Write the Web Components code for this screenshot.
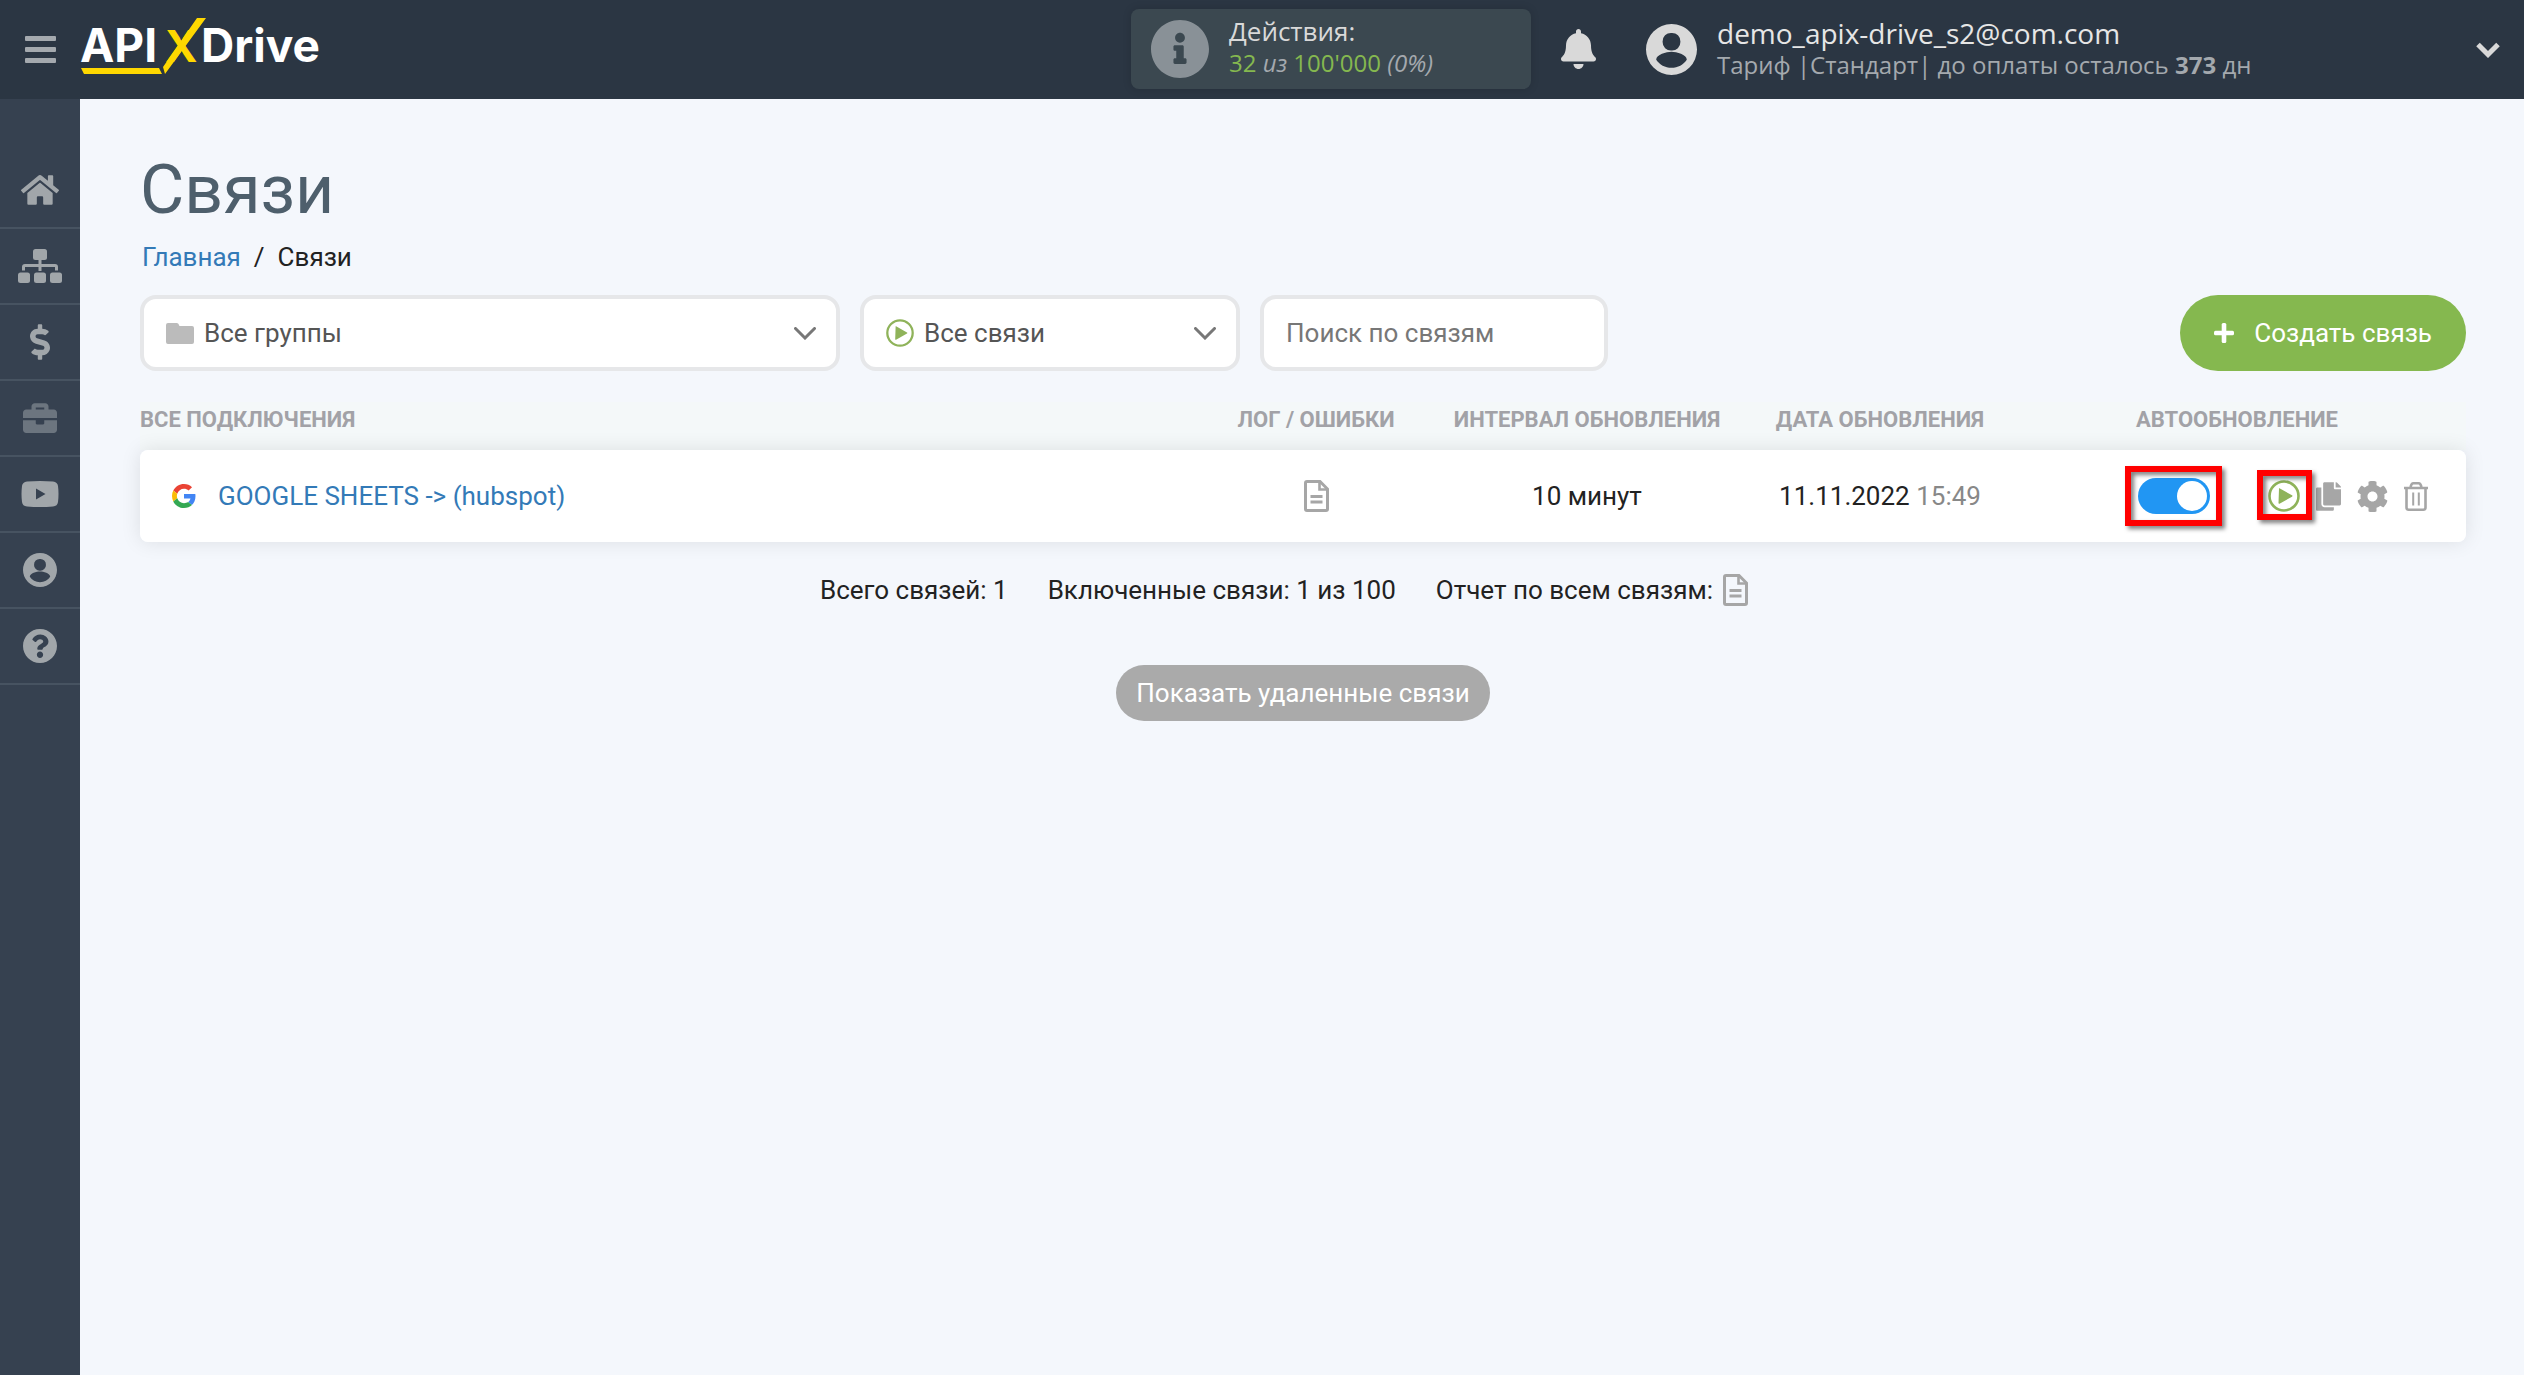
<!DOCTYPE html>
<html lang="ru">
<head>
<meta charset="utf-8">
<title>Связи</title>
<style>
  body { margin: 0; background: #f4f7fc; color: #222; font: 26px/36px Roboto, sans-serif; }
</style>
</head>
<body>
<app-shell>
  <app-header slot="header" email="demo_apix-drive_s2@com.com"></app-header>
  <side-nav slot="nav"></side-nav>
  <page-title heading="Связи"></page-title>
  <tool-bar></tool-bar>
  <connection-table></connection-table>
  <connection-summary></connection-summary>
</app-shell>

<script>
const ICONS = {
  home: ['0 32 576 448', '<path d="M280.37 148.26L96 300.11V464a16 16 0 0 0 16 16l112.06-.29a16 16 0 0 0 15.92-16V368a16 16 0 0 1 16-16h64a16 16 0 0 1 16 16v95.64a16 16 0 0 0 16 16.05L464 480a16 16 0 0 0 16-16V300L295.67 148.26a12.19 12.19 0 0 0-15.3 0zM571.6 251.47L488 182.56V44.05a12 12 0 0 0-12-12h-56a12 12 0 0 0-12 12v72.61L318.47 43a48 48 0 0 0-61 0L4.34 251.47a12 12 0 0 0-1.6 16.9l25.5 31A12 12 0 0 0 45.15 301l235.22-193.74a12.19 12.19 0 0 1 15.3 0L530.9 301a12 12 0 0 0 16.9-1.6l25.5-31a12 12 0 0 0-1.7-16.93z"/>'],
  sitemap: ['0 0 44 34', '<rect x="15" width="14" height="11" rx="2.5"/><rect y="23.500" width="12" height="10.500" rx="2.500"/><rect x="16" y="23.500" width="12" height="10.500" rx="2.500"/><rect x="32" y="23.500" width="12" height="10.500" rx="2.500"/><path d="M5.500 21.500V18a1.500 1.500 0 0 1 1.500-1.500H37a1.500 1.500 0 0 1 1.500 1.500v3.500M22 10v12" fill="none" stroke="currentColor" stroke-width="3"/>'],
  dollar: ['0 0 288 512', '<path d="M209.2 233.4l-108-31.6C88.700 198.200 80 186.500 80 173.500c0-16.300 13.200-29.500 29.500-29.500h66.300c12.200 0 24.200 3.700 34.200 10.500 6.100 4.100 14.300 3.100 19.500-2l34.800-34c7.100-6.900 6.100-18.400-1.800-24.500C238 74.800 207.400 64.100 176 64V16c0-8.800-7.200-16-16-16h-32c-8.800 0-16 7.200-16 16v48h-2.500C45.800 64-5.400 118.700.5 183.600c4.200 46.100 39.400 83.600 83.800 96.600l102.500 30c12.500 3.700 21.200 15.300 21.200 28.300 0 16.300-13.200 29.500-29.500 29.500h-66.300C100 368 88 364.300 78 357.500c-6.100-4.100-14.300-3.100-19.500 2l-34.800 34c-7.100 6.900-6.100 18.400 1.800 24.500 24.500 19.200 55.100 29.900 86.500 30v48c0 8.800 7.200 16 16 16h32c8.800 0 16-7.200 16-16v-48.200c46.600-.9 90.300-28.600 105.700-72.700 21.500-61.600-14.600-124.800-72.500-141.700z"/>'],
  briefcase: ['0 32 512 448', '<path d="M320 336c0 8.840-7.160 16-16 16h-96c-8.840 0-16-7.160-16-16v-48H0v144c0 25.600 22.400 48 48 48h416c25.600 0 48-22.400 48-48V288H320v48zm144-208h-80V80c0-25.600-22.400-48-48-48H176c-25.600 0-48 22.400-48 48v48H48c-25.600 0-48 22.400-48 48v80h512v-80c0-25.600-22.400-48-48-48zm-144 0H192V96h128v32z"/>'],
  video: ['0 0 38 26', '<path fill-rule="evenodd" d="M6 .5Q19-.500 32 .5Q36.500 1 37 5Q38 13 37 21Q36.500 25 32 25.500Q19 26.500 6 25.500Q1.500 25 1 21Q0 13 1 5Q1.500 1 6 .5ZM15 7.500V18.500L24.500 13Z"/>'],
  user: ['2 2 20 20', '<path d="M12,19.200C9.500,19.200 7.290,17.920 6,16C6.030,14 10,12.900 12,12.900C14,12.900 17.970,14 18,16C16.710,17.920 14.500,19.200 12,19.200M12,5.500A3.300,3.300 0 0,1 15.500,9A3.300,3.300 0 0,1 12,12.400A3.300,3.300 0 0,1 8.500,9A3.300,3.300 0 0,1 12,5.500M12,2A10,10 0 0,0 2,12A10,10 0 0,0 12,22A10,10 0 0,0 22,12C22,6.470 17.500,2 12,2Z" fill-rule="evenodd"/>'],
  help: ['8 8 496 496', '<path d="M504 256c0 136.997-111.043 248-248 248S8 392.997 8 256C8 119.083 119.043 8 256 8s248 111.083 248 248zM262.655 90c-54.497 0-89.255 22.957-116.549 63.758-3.536 5.286-2.353 12.415 2.715 16.258l34.699 26.310c5.205 3.947 12.621 3.008 16.665-2.122 17.864-22.658 30.113-35.797 57.303-35.797 20.429 0 45.698 13.148 45.698 32.958 0 14.976-12.363 22.667-32.534 33.976C247.128 238.528 216 254.941 216 296v4c0 6.627 5.373 12 12 12h56c6.627 0 12-5.373 12-12v-1.333c0-28.462 83.186-29.647 83.186-106.667 0-58.002-60.165-102-116.531-102zM256 338c-25.365 0-46 20.635-46 46 0 25.364 20.635 46 46 46s46-20.636 46-46c0-25.365-20.635-46-46-46z"/>'],
  info: ['8 8 496 496', '<path d="M256 8C119.043 8 8 119.083 8 256c0 136.997 111.043 248 248 248s248-111.003 248-248C504 119.083 392.957 8 256 8zm0 110c23.196 0 42 18.804 42 42s-18.804 42-42 42-42-18.804-42-42 18.804-42 42-42zm56 254c0 6.627-5.373 12-12 12h-88c-6.627 0-12-5.373-12-12v-24c0-6.627 5.373-12 12-12h12v-64h-12c-6.627 0-12-5.373-12-12v-24c0-6.627 5.373-12 12-12h64c6.627 0 12 5.373 12 12v100h12c6.627 0 12 5.373 12 12v24z"/>'],
  bell: ['0 0 448 512', '<path d="M224 512c35.320 0 63.970-28.650 63.970-64H160.030c0 35.350 28.650 64 63.970 64zm215.390-149.710c-19.320-20.760-55.470-51.990-55.470-154.290 0-77.700-54.480-139.900-127.940-155.160V32c0-17.670-14.320-32-31.980-32s-31.980 14.330-31.980 32v20.840C118.560 68.100 64.080 130.300 64.080 208c0 102.300-36.150 133.530-55.470 154.290-6 6.450-8.660 14.160-8.610 21.710.11 16.400 12.980 32 32.100 32h383.800c19.120 0 32-15.600 32.100-32 .05-7.550-2.610-15.270-8.610-21.710z"/>'],
  menu: ['0 0 31 27', '<rect width="31" height="5" rx="1"/><rect y="11" width="31" height="5" rx="1"/><rect y="22" width="31" height="5" rx="1"/>'],
  caret: ['0 0 26 17', '<path d="M3 3.500L13 13.500L23 3.500" fill="none" stroke="currentColor" stroke-width="5"/>'],
  chevron: ['0 0 22 13', '<path d="M1.500 1.500L11 11L20.500 1.500" fill="none" stroke="currentColor" stroke-width="3" stroke-linecap="round"/>'],
  folder: ['0 0 28 21', '<path d="M2 0H11Q12.500 0 13.500 3H26Q28 3 28 5V19Q28 21 26 21H2Q0 21 0 19V2Q0 0 2 0Z"/>'],
  play: ['0 0 32 32', '<circle cx="16" cy="16" r="14.500" fill="none" stroke="currentColor" stroke-width="2.600"/><path d="M11 8.500Q10.500 8 11.500 8.300L24 15.300Q25 16 24 16.700L11.500 23.700Q10.500 24 10.500 23Z"/>'],
  plus: ['0 0 20 20', '<rect x="7.700" width="4.600" height="20" rx="1.500"/><rect y="7.700" width="20" height="4.600" rx="1.500"/>'],
  file: ['0 0 25 32', '<path d="M3 1.500H16L23.500 9V29Q23.500 30.500 22 30.500H3Q1.500 30.500 1.500 29V3Q1.500 1.500 3 1.500Z" fill="none" stroke="currentColor" stroke-width="3"/><path d="M15.500 2V9.500H23" fill="none" stroke="currentColor" stroke-width="2.600"/><rect x="6.500" y="15" width="12" height="3"/><rect x="6.500" y="20.500" width="12" height="3"/>'],
  copy: ['0 0 448 512', '<path d="M320 448v40c0 13.255-10.745 24-24 24H24c-13.255 0-24-10.745-24-24V120c0-13.255 10.745-24 24-24h72v296c0 30.879 25.121 56 56 56h168zm0-344V0H152c-13.255 0-24 10.745-24 24v368c0 13.255 10.745 24 24 24h272c13.255 0 24-10.745 24-24V128H344c-13.200 0-24-10.800-24-24zm120.971-31.029L375.029 7.029A24 24 0 0 0 358.059 0H352v96h96v-6.059a24 24 0 0 0-7.029-16.970z"/>'],
  gear: ['8 8 496 496', '<path d="M487.400 315.700l-42.600-24.600c4.300-23.200 4.300-47 0-70.200l42.600-24.600c4.900-2.800 7.100-8.600 5.500-14-11.100-35.600-30-67.800-54.700-94.600-3.800-4.100-10-5.100-14.800-2.300L380.800 110c-17.900-15.400-38.500-27.300-60.800-35.100V25.800c0-5.600-3.900-10.500-9.400-11.700-36.700-8.200-74.300-7.800-109.200 0-5.500 1.200-9.400 6.100-9.400 11.700V75c-22.200 7.900-42.800 19.800-60.800 35.100L88.700 85.500c-4.900-2.800-11-1.900-14.800 2.300-24.700 26.700-43.600 58.900-54.700 94.600-1.700 5.400.6 11.200 5.500 14L67.300 221c-4.300 23.200-4.300 47 0 70.200l-42.600 24.600c-4.900 2.800-7.100 8.600-5.500 14 11.100 35.600 30 67.800 54.700 94.600 3.800 4.100 10 5.100 14.800 2.300l42.600-24.600c17.900 15.400 38.500 27.300 60.800 35.100v49.200c0 5.600 3.900 10.500 9.400 11.700 36.700 8.200 74.300 7.800 109.200 0 5.500-1.200 9.400-6.100 9.400-11.700v-49.200c22.200-7.900 42.800-19.800 60.800-35.100l42.600 24.600c4.900 2.800 11 1.900 14.800-2.300 24.700-26.700 43.600-58.900 54.700-94.600 1.500-5.500-.7-11.300-5.600-14.100zM256 336c-44.100 0-80-35.900-80-80s35.900-80 80-80 80 35.900 80 80-35.900 80-80 80z"/>'],
  trash: ['0 0 24 29', '<path d="M0 6H24M2.500 6V25.500Q2.500 27.700 4.700 27.700H19.300Q21.500 27.700 21.500 25.500V6M6.500 6Q7 1.300 9.500 1.300H14.500Q17 1.300 17.500 6" fill="none" stroke="currentColor" stroke-width="2.600"/><path d="M9.200 10.500V23.500M14.800 10.500V23.500" stroke="currentColor" stroke-width="2"/>'],
  google: ['0 0 48 48', '<path fill="#EA4335" d="M24 9.500c3.540 0 6.710 1.220 9.210 3.600l6.850-6.850C35.900 2.380 30.470 0 24 0 14.620 0 6.510 5.380 2.560 13.220l7.980 6.190C12.430 13.720 17.740 9.500 24 9.500z"/><path fill="#4285F4" d="M46.980 24.550c0-1.570-.15-3.090-.38-4.550H24v9.020h12.940c-.58 2.960-2.260 5.480-4.780 7.180l7.730 6c4.510-4.180 7.090-10.360 7.090-17.650z"/><path fill="#FBBC05" d="M10.530 28.590c-.48-1.450-.76-2.990-.76-4.590s.27-3.140.76-4.590l-7.980-6.190C.92 16.460 0 20.120 0 24c0 3.880.92 7.540 2.560 10.780l7.970-6.190z"/><path fill="#34A853" d="M24 48c6.480 0 11.930-2.130 15.890-5.810l-7.730-6c-2.150 1.450-4.920 2.300-8.160 2.300-6.260 0-11.570-4.220-13.470-9.910l-7.980 6.190C6.510 42.620 14.620 48 24 48z"/>']
};

const BASE = `*,*::before,*::after{box-sizing:border-box}
  button{border:0;background:none;padding:0;color:inherit;font:inherit;cursor:pointer}
  a{color:#337ab7;text-decoration:none}`;

class BaseElement extends HTMLElement {
  connectedCallback() {
    if (this.shadowRoot) return;
    this.attachShadow({ mode: 'open' }).innerHTML = `<style>${BASE}${this.styles()}</style>${this.view()}`;
  }
}
const define = (name, styles, view) => customElements.define(name, class extends BaseElement {
  styles() { return styles; }
  view() { return view(this); }
});

customElements.define('ui-icon', class extends HTMLElement {
  connectedCallback() {
    if (this.shadowRoot) return;
    const [box, body] = ICONS[this.getAttribute('name')];
    const [, , w, h] = box.split(' ').map(Number);
    const width = Number(this.getAttribute('width'));
    this.attachShadow({ mode: 'open' }).innerHTML =
      `<style>:host{display:inline-flex;flex:none}svg{display:block;fill:currentColor}</style>
       <svg viewBox="${box}" width="${width}" height="${Math.round(width * h / w)}" aria-hidden="true">${body}</svg>`;
  }
});

define('app-shell', `
  :host{display:flex;flex-direction:column;min-height:100vh}
  .body{display:flex;flex:1}
  main{flex:1;min-width:0;padding:51px 58px 40px 60px}`,
  () => `<slot name="header"></slot><div class="body"><slot name="nav"></slot><main><slot></slot></main></div>`);

define('brand-logo', `
  :host{display:block}
  a,svg{display:block}
  text{font:700 46px Inter,sans-serif;fill:#fff}
  .accent{fill:#ffd800}
  text.accent{font-size:44px}`,
  () => `<a href="#" aria-label="APIXDrive"><svg width="246" height="66" viewBox="0 0 246 66">
    <text x="0" y="46">API</text><text class="accent" x="85" y="46">X</text><text x="121" y="46">Drive</text>
    <path class="accent" d="M1 52H79L82 58H4ZM83 51L117 2H126L85 58Z"/>
  </svg></a>`);

define('app-header', `
  :host{display:grid;grid-template-columns:1131fr 400px 115px 878fr;align-items:center;height:98px;background:#2b3643;font-family:"Open Sans","Noto Sans",sans-serif;line-height:32px;color:#d9d9d9;border-bottom:1px solid #2b3643}
  .left{display:flex;align-items:center;gap:24px;padding-left:25px}
  .left button{color:#a4a9ae;display:flex}
  .usage{display:flex;align-items:center;gap:20px;height:80px;padding:0 20px;border-radius:8px;background:#3b4850;box-shadow:0 0 8px rgba(0,0,0,.15)}
  .usage ui-icon{color:#899197}
  .usage > div{padding-bottom:4px}
  .small{font-size:24px;color:#a4a9ae}
  .green{color:#85b84f}
  .bell{justify-self:center;display:flex;margin-right:20px}
  .user{display:flex;align-items:center;gap:20px;padding-right:23px}
  .who{flex:1}
  .who .name{font-size:28px;color:#e6e6e6}
  .user button{display:flex}`,
  el => `<div class="left"><button aria-label="Меню"><ui-icon name="menu" width="31"></ui-icon></button><brand-logo></brand-logo></div>
  <div class="usage"><ui-icon name="info" width="58"></ui-icon>
    <div><div>Действия:</div><div class="small"><span class="green">32</span> <i>из</i> <span class="green">100'000</span> <i>(0%)</i></div></div></div>
  <button class="bell" aria-label="Уведомления"><ui-icon name="bell" width="35"></ui-icon></button>
  <div class="user"><ui-icon name="user" width="51"></ui-icon>
    <div class="who"><div class="name">${el.getAttribute('email')}</div><div class="small">Тариф |Стандарт| до оплаты осталось <b>373</b> дн</div></div>
    <button aria-label="Профиль"><ui-icon name="caret" width="26"></ui-icon></button></div>`);

define('side-nav', `
  :host{display:block;flex:none;width:80px;padding-top:54px;background:#364150}
  a{display:flex;align-items:center;justify-content:center;height:76px;border-bottom:2px solid #475361;color:#a1a6aa}
  a.dim{color:#6c757f}`,
  () => [['home', 38, 'Главная'], ['sitemap', 44, 'Связи'], ['dollar', 20, 'Оплата'], ['briefcase', 34, 'Проекты'], ['video', 38, 'Видео'], ['user', 34, 'Профиль'], ['help', 34, 'Помощь']]
    .map(([n, w, t]) => `<a href="#" aria-label="${t}"${n === 'briefcase' ? ' class="dim"' : ''}><ui-icon name="${n}" width="${w}"></ui-icon></a>`).join(''));

define('page-title', `
  :host{display:block}
  h1{margin:0 0 9px;font-size:68px;line-height:80px;font-weight:400;color:#4e5f6c}
  nav{display:flex;gap:13px;padding-left:2px}`,
  el => `<h1>${el.getAttribute('heading')}</h1><nav><a href="#">Главная</a><span>/</span><span>${el.getAttribute('heading')}</span></nav>`);

define('select-box', `
  :host{display:grid;grid-template-columns:auto 1fr auto;align-items:center;height:76px;border:4px solid #e6e7e9;border-radius:16px;background:#fff;color:#555}
  ui-icon{grid-row:1;z-index:1;pointer-events:none}
  .lead{grid-column:1;margin-left:22px;color:var(--lead,#bbb)}
  .arrow{grid-column:3;margin-right:20px;color:#777}
  select{grid-row:1;grid-column:1/-1;height:100%;width:100%;appearance:none;border:0;border-radius:12px;background:none;padding:0 50px 0 60px;font:inherit;color:inherit}`,
  el => `<ui-icon class="lead" name="${el.getAttribute('icon')}" width="28"></ui-icon>
    <select aria-label="${el.getAttribute('label')}"><option>${el.getAttribute('label')}</option></select>
    <ui-icon class="arrow" name="chevron" width="22"></ui-icon>`);

define('tool-bar', `
  :host{display:flex;gap:20px;margin-top:20px}
  .groups{flex:0 1 700px}
  .links{flex:0 1 380px;--lead:#8fb35a}
  input{flex:0 1 348px;min-width:0;height:76px;border:4px solid #e6e7e9;border-radius:16px;background:#fff;padding:0 22px;font:inherit}
  input::placeholder{color:#777;opacity:1}
  button{display:flex;align-items:center;gap:20px;height:76px;margin-left:auto;padding:0 34px;border-radius:38px;background:#85b84f;color:#fff}`,
  () => `<select-box class="groups" icon="folder" label="Все группы"></select-box>
    <select-box class="links" icon="play" label="Все связи"></select-box>
    <input type="text" placeholder="Поиск по связям" aria-label="Поиск по связям">
    <button><ui-icon name="plus" width="20"></ui-icon>Создать связь</button>`);

define('toggle-switch', `
  :host{display:flex}
  input{appearance:none;margin:0;width:72px;height:36px;padding:3px;border-radius:18px;background:#ccc;display:flex}
  input:checked{background:#2196f3;justify-content:flex-end}
  input::before{content:"";width:30px;height:30px;border-radius:50%;background:#fff}`,
  () => `<input type="checkbox" role="switch" checked aria-label="Автообновление">`);

define('row-actions', `
  :host{display:flex;align-items:center;justify-content:flex-end;padding-right:28px;color:#a6a6a6}
  button{display:flex;align-items:center;justify-content:center;width:44px;height:44px}
  .run{color:#8fb35a}
  toggle-switch{margin-right:52px}
  .marked{position:relative}
  .marked::after{content:"";position:absolute;inset:-12px -12px -12px -13px;border:6px solid #f00;filter:drop-shadow(3px 3px 2px rgba(0,0,0,.5));pointer-events:none}
  .run.marked::after{inset:-4px -6px -2px -5px}`,
  () => `<toggle-switch class="marked"></toggle-switch>
    <button class="run marked" aria-label="Запустить"><ui-icon name="play" width="32"></ui-icon></button>
    <button aria-label="Копировать"><ui-icon name="copy" width="25"></ui-icon></button>
    <button aria-label="Настройки"><ui-icon name="gear" width="31"></ui-icon></button>
    <button aria-label="Удалить"><ui-icon name="trash" width="24"></ui-icon></button>`);

define('connection-table', `
  :host{display:block;margin-top:31px}
  table{width:100%;table-layout:fixed;border-collapse:separate;border-spacing:0}
  .log{width:212px}.interval{width:330px}.date{width:256px}.auto{width:458px}
  th{height:48px;padding:0 0 12px;font-size:22px;line-height:36px;font-weight:700;text-transform:uppercase;color:#a2a2a7;background:#f4f8f9}
  td{height:92px;padding:0;text-align:center;background:#fff}
  th:first-child{text-align:left}
  tbody tr{border-radius:8px;box-shadow:0 0 20px rgba(0,0,0,.1)}
  td:first-child{border-radius:8px 0 0 8px}
  td:last-child{border-radius:0 8px 8px 0}
  .name{display:flex;align-items:center;gap:22px;padding-left:32px}
  .grey{display:flex;justify-content:center;color:#a6a6a6}
  time span{color:#888}`,
  () => `<table><colgroup><col><col class="log"><col class="interval"><col class="date"><col class="auto"></colgroup>
    <thead><tr><th>Все подключения</th><th>Лог / ошибки</th><th>Интервал обновления</th><th>Дата обновления</th><th>Автообновление</th></tr></thead>
    <tbody><tr>
      <td><div class="name"><ui-icon name="google" width="24"></ui-icon><a href="#">GOOGLE SHEETS -&gt; (hubspot)</a></div></td>
      <td><a href="#" class="grey" aria-label="Лог"><ui-icon name="file" width="25"></ui-icon></a></td>
      <td>10 минут</td>
      <td><time>11.11.2022 <span>15:49</span></time></td>
      <td><row-actions></row-actions></td>
    </tr></tbody></table>`);

define('connection-summary', `
  :host{display:flex;flex-direction:column;align-items:center;gap:57px;margin-top:30px}
  .stats{display:flex;gap:40px;padding-right:38px}
  .report{display:flex;align-items:center;gap:10px}
  .report a{display:flex;color:#a6a6a6}
  button{height:56px;padding:0 20px;border-radius:28px;background:#aaa;color:#fff}`,
  () => `<div class="stats"><span>Всего связей: 1</span><span>Включенные связи: 1 из 100</span>
    <span class="report">Отчет по всем связям: <a href="#" aria-label="Отчет"><ui-icon name="file" width="25"></ui-icon></a></span></div>
    <button>Показать удаленные связи</button>`);
</script>
</body>
</html>
